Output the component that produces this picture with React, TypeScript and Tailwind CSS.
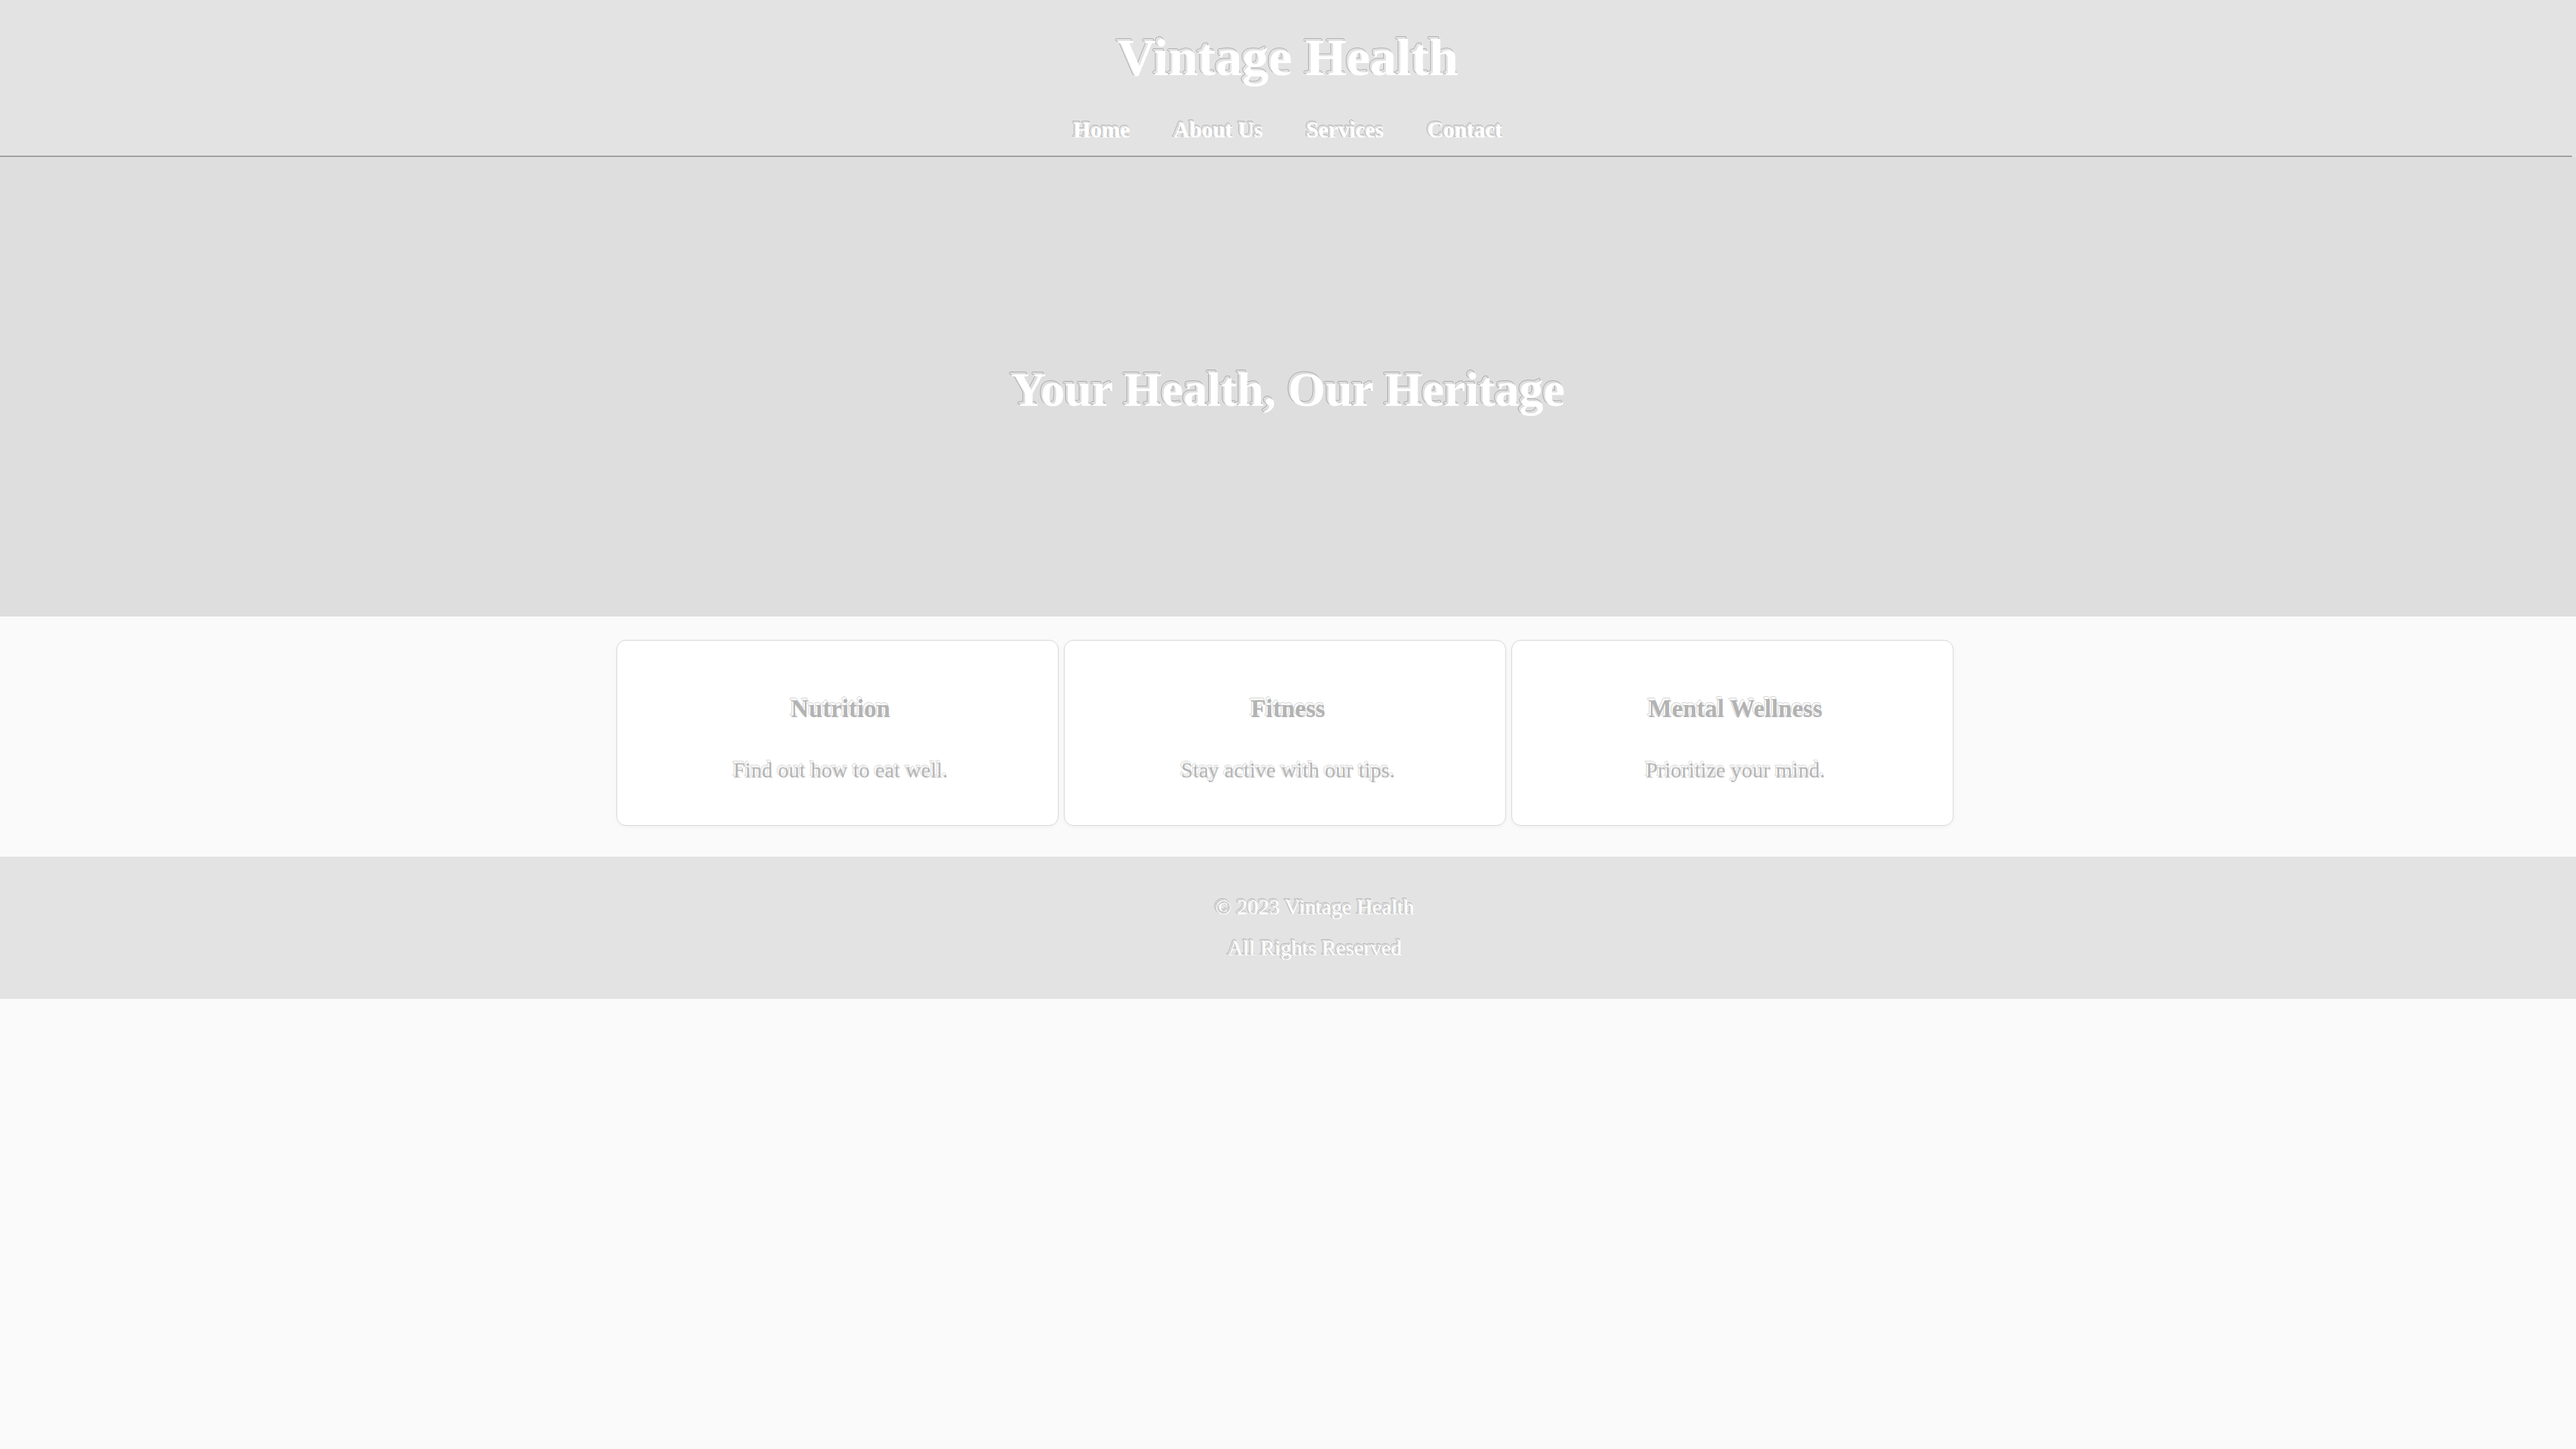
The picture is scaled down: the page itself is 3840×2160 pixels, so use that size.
import React from 'react';

const navLinks = ['Home', 'About Us', 'Services', 'Contact'];

const cards = [
  { title: 'Nutrition', desc: 'Find out how to eat well.' },
  { title: 'Fitness', desc: 'Stay active with our tips.' },
  { title: 'Mental Wellness', desc: 'Prioritize your mind.' },
];

const App: React.FC = () => {
  return (
    <div className="min-h-screen bg-[#fafafa] font-['Liberation_Serif','Times_New_Roman',serif]">
      {/* HEADER */}
      <header className="bg-[#e3e3e3] pt-[42px] text-center text-white">
        <h1 className="text-[79px] leading-[87px] font-bold [text-shadow:-3px_-3px_0_#e3e3e3,-4px_-3px_0_#ababab,-2px_-3px_0_#ababab,-3px_-4px_0_#ababab,-3px_-2px_0_#ababab]">
          Vintage Health
        </h1>
        <nav className="mt-[46px] pb-[19px] flex justify-center gap-[65px]">
          {navLinks.map((link) => (
            <a
              key={link}
              href="#"
              className="text-[33px] leading-[38px] font-bold text-white [text-shadow:-2px_-2px_0_#e3e3e3,-3px_-2px_0_#b0b0b0,-1px_-2px_0_#b0b0b0,-2px_-3px_0_#b0b0b0,-2px_-1px_0_#b0b0b0]"
            >
              {link}
            </a>
          ))}
        </nav>
        <div className="h-[2px] w-[calc(100%-6px)] bg-[#9c9c9c]"></div>
      </header>

      {/* HERO */}
      <section className="h-[685px] bg-[#dedede] flex items-center justify-center pt-[9px]">
        <h2 className="text-[72px] leading-[82px] font-bold text-white [text-shadow:-3px_-3px_0_#dedede,-4px_-3px_0_#a8a8a8,-2px_-3px_0_#a8a8a8,-3px_-4px_0_#a8a8a8,-3px_-2px_0_#a8a8a8]">
          Your Health, Our Heritage
        </h2>
      </section>

      {/* SERVICES */}
      <section className="bg-[#fafafa] pt-[35px] pb-[46px]">
        <div className="flex justify-center gap-[8px] pr-[10px]">
          {cards.map((card) => (
            <div
              key={card.title}
              className="w-[659px] h-[277px] bg-white border border-[#d6d6d6] rounded-[14px] shadow-[0_2px_6px_rgba(0,0,0,0.04)] pt-[80px] pl-[10px] text-center"
            >
              <h3 className="text-[37px] leading-[43px] font-bold text-[#b3b3b3] [text-shadow:-2px_-3px_0_#ffffff,-3px_-3px_0_#d0d0d0,-1px_-3px_0_#d0d0d0,-2px_-4px_0_#d0d0d0,-2px_-2px_0_#d0d0d0]">
                {card.title}
              </h3>
              <p className="mt-[52px] text-[32px] leading-[37px] text-[#b5b5b5] [text-shadow:-2px_-3px_0_#ffffff,-3px_-3px_0_#d4d4d4,-1px_-3px_0_#d4d4d4,-2px_-4px_0_#d4d4d4,-2px_-2px_0_#d4d4d4]">
                {card.desc}
              </p>
            </div>
          ))}
        </div>
      </section>

      {/* FOOTER */}
      <footer className="bg-[#e3e3e3] py-[57px] pl-[80px] text-center text-white text-[32px] leading-[37px] [text-shadow:-2px_-2px_0_#e3e3e3,-3px_-2px_0_#b4b4b4,-1px_-2px_0_#b4b4b4,-2px_-3px_0_#b4b4b4,-2px_-1px_0_#b4b4b4]">
        <p>© 2023 Vintage Health</p>
        <p className="mt-[24px]">All Rights Reserved</p>
      </footer>
    </div>
  );
};

export default App;
